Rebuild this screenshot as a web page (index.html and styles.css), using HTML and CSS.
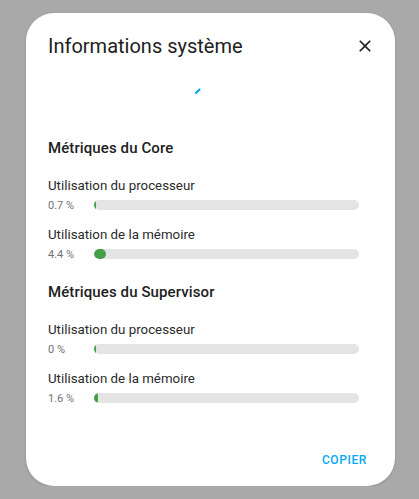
FILE: index.html
```html
<!DOCTYPE html>
<html lang="fr">
<head>
<meta charset="utf-8">
<title>Informations système</title>
<link rel="stylesheet" href="styles.css">
</head>
<body>
<div class="dialog">
  <div class="header">
    <h2 class="title">Informations système</h2>
    <button class="close" aria-label="Fermer">
      <svg viewBox="0 0 24 24" width="20" height="20"><path d="M19,6.41L17.59,5L12,10.59L6.41,5L5,6.41L10.59,12L5,17.59L6.41,19L12,13.41L17.59,19L19,17.59L13.41,12L19,6.41Z" fill="#212121"/></svg>
    </button>
  </div>
  <div class="spinner-wrap">
    <svg class="spinner" viewBox="0 0 10 10" width="10" height="10"><line x1="3" y1="7" x2="6.5" y2="3.5" stroke="#03a9f4" stroke-width="2.2" stroke-linecap="round"/></svg>
  </div>
  <div class="section">
    <h3 class="heading">Métriques du Core</h3>
    <div class="metric">
      <div class="label">Utilisation du processeur</div>
      <div class="bar-row"><span class="value">0.7 %</span><div class="track"><div class="fill" style="width:0.7%"></div></div></div>
    </div>
    <div class="metric">
      <div class="label">Utilisation de la mémoire</div>
      <div class="bar-row"><span class="value">4.4 %</span><div class="track"><div class="fill" style="width:4.4%"></div></div></div>
    </div>
  </div>
  <div class="section">
    <h3 class="heading">Métriques du Supervisor</h3>
    <div class="metric">
      <div class="label">Utilisation du processeur</div>
      <div class="bar-row"><span class="value">0 %</span><div class="track"><div class="fill" style="width:0%"></div></div></div>
    </div>
    <div class="metric">
      <div class="label">Utilisation de la mémoire</div>
      <div class="bar-row"><span class="value">1.6 %</span><div class="track"><div class="fill" style="width:1.6%"></div></div></div>
    </div>
  </div>
  <div class="actions">
    <button class="copy">Copier</button>
  </div>
</div>
</body>
</html>
```
FILE: styles.css
```css
html, body {
  margin: 0;
  padding: 0;
  background: #a9a9a9;
  font-family: Roboto, "Noto Sans", sans-serif;
}
body {
  padding: 13px 0 0 26px;
}
.dialog {
  box-sizing: border-box;
  width: 369px;
  height: 473px;
  background: #ffffff;
  border-radius: 28px;
  padding: 0 36px 0 22px;
  display: flex;
  flex-direction: column;
  box-shadow: 0 1px 3px rgba(0,0,0,0.15);
}
.header {
  display: flex;
  align-items: center;
  justify-content: space-between;
  height: 24px;
  margin-top: 21px;
  margin-right: -26px;
}
.title {
  margin: 0;
  font-size: 20px;
  line-height: 24px;
  font-weight: 400;
  color: #212121;
}
.close {
  width: 40px;
  height: 40px;
  border: 0;
  background: none;
  padding: 0;
  display: flex;
  align-items: center;
  justify-content: center;
  cursor: pointer;
}
.spinner-wrap {
  height: 20px;
  margin-top: 23px;
  display: flex;
  align-items: center;
  justify-content: center;
  padding-right: 11px;
}
.section {
  display: flex;
  flex-direction: column;
}
.heading {
  margin: 0;
  font-size: 15px;
  line-height: 20px;
  font-weight: 500;
  color: #212121;
  letter-spacing: 0.1px;
}
.spinner-wrap + .section { margin-top: 37px; }
.section + .section { margin-top: 23px; }
.metric { margin-top: 20px; }
.metric + .metric { margin-top: 17px; }
.label {
  font-size: 13.3px;
  line-height: 16px;
  color: #2b2b2b;
}
.bar-row {
  display: flex;
  align-items: center;
  margin-top: 6px;
  height: 10px;
}
.value {
  width: 46px;
  flex: none;
  font-size: 11px;
  color: #727272;
}
.track {
  flex: 1;
  height: 10px;
  border-radius: 5px;
  background: #e4e4e4;
  overflow: hidden;
}
.fill {
  height: 100%;
  min-width: 2px;
  background: #43a047;
  border-radius: 5px;
}
.actions {
  margin-top: auto;
  margin-right: -8px;
  margin-bottom: 18px;
  display: flex;
  justify-content: flex-end;
}
.copy {
  border: 0;
  background: none;
  padding: 0;
  font-family: inherit;
  font-size: 12px;
  line-height: 16px;
  font-weight: 500;
  letter-spacing: 0.6px;
  text-transform: uppercase;
  color: #03a9f4;
  cursor: pointer;
}
```
